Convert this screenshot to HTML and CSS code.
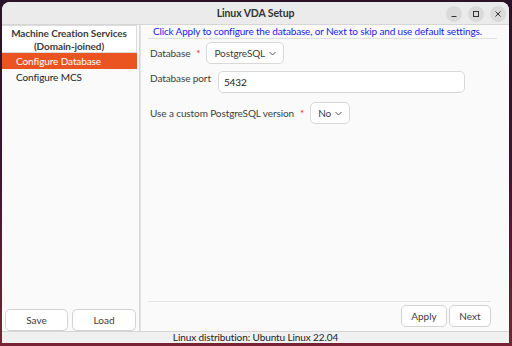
FILE: index.html
```html
<!DOCTYPE html>
<html>
<head>
<meta charset="utf-8">
<link rel="stylesheet" href="styles.css">
</head>
<body>
<div class="window">
  <div class="titlebar">
    <div class="title">Linux VDA Setup</div>
    <div class="controls">
      <span class="ctl"><svg width="8" height="8" viewBox="0 0 8 8"><path d="M1.5 6.5h5" stroke="#333" stroke-width="1"/></svg></span>
      <span class="ctl"><svg width="8" height="8" viewBox="0 0 8 8"><rect x="1.5" y="1.5" width="5" height="5" fill="none" stroke="#333" stroke-width="1"/></svg></span>
      <span class="ctl"><svg width="8" height="8" viewBox="0 0 8 8"><path d="M1.5 1.5l5 5M6.5 1.5l-5 5" stroke="#333" stroke-width="1"/></svg></span>
    </div>
  </div>
  <div class="main">
    <div class="sidebar">
      <div class="side-head">Machine Creation Services<br>(Domain-joined)</div>
      <div class="side-item active">Configure Database</div>
      <div class="side-item">Configure MCS</div>
      <div class="side-fill"></div>
      <div class="side-buttons">
        <button class="btn side-btn">Save</button>
        <button class="btn side-btn">Load</button>
      </div>
    </div>
    <div class="content">
      <div class="hint">Click Apply to configure the database, or Next to skip and use default settings.</div>
      <div class="form">
        <div class="row">
          <span class="label">Database</span><span class="req">*</span>
          <span class="combo">PostgreSQL <svg class="chev" width="7" height="5" viewBox="0 0 7 5"><path d="M0.5 1l3 3 3-3" fill="none" stroke="#555" stroke-width="1"/></svg></span>
        </div>
        <div class="row row-port">
          <span class="label label-top">Database port</span>
          <span class="input">5432</span>
        </div>
        <div class="row">
          <span class="label">Use a custom PostgreSQL version</span><span class="req">*</span>
          <span class="combo">No <svg class="chev" width="7" height="5" viewBox="0 0 7 5"><path d="M0.5 1l3 3 3-3" fill="none" stroke="#555" stroke-width="1"/></svg></span>
        </div>
      </div>
      <div class="content-fill"></div>
      <div class="actions">
        <button class="btn act-btn apply">Apply</button>
        <button class="btn act-btn next">Next</button>
      </div>
    </div>
  </div>
  <div class="status">Linux distribution: Ubuntu Linux 22.04</div>
</div>
</body>
</html>
```
FILE: styles.css
```css
* { box-sizing: border-box; }
html, body { margin: 0; padding: 0; }
body {
  width: 512px; height: 346px; overflow: hidden;
  background: linear-gradient(180deg, #2a1326 0%, #3d1530 50%, #7a2235 100%);
  font-family: Lato, sans-serif;
  font-size: 10px;
  letter-spacing: -0.1px;
  color: #3c3c3c;
  padding: 2px 3px 3px 2px;
}
.window {
  width: 507px; height: 341px;
  background: #fafafa;
  border-radius: 8px 8px 0 0;
  display: flex; flex-direction: column;
  overflow: hidden;
}
.titlebar {
  height: 23px; flex: none;
  background: #ebebeb;
  border-bottom: 1px solid #d6d6d6;
  display: flex; align-items: center; justify-content: center;
  position: relative;
}
.title { font-weight: bold; font-size: 10.5px; color: #333; }
.controls {
  position: absolute; right: 3px; top: 4px;
  display: flex; gap: 6px;
}
.ctl {
  width: 16px; height: 16px; border-radius: 50%;
  background: #dadada;
  display: flex; align-items: center; justify-content: center;
}
.main { flex: 1; display: flex; min-height: 0; }
.sidebar {
  width: 138px; flex: none;
  display: flex; flex-direction: column;
  background: #fafafa;
  border-right: 1px solid #d8d8d8;
}
.side-head {
  background: #fff;
  border: 1px solid #dcdcdc; border-left: none;
  margin-right: 2px;
  text-align: center; font-weight: bold; color: #3c3c3c;
  line-height: 13px; padding: 1px 0 1px;
  height: 28px;
}
.side-item { height: 16px; line-height: 16px; padding-left: 14px; color: #222; margin-right: 2px; }
.side-item.active { background: #e95420; color: #fff; }
.side-fill { flex: 1; }
.side-buttons { display: flex; gap: 4px; padding: 0 2px 0 3px; height: 22px; }
.btn {
  font: inherit; color: #3c3c3c;
  background: #fff; border: 1px solid #d2d2d2; border-radius: 5px;
  padding: 0;
}
.side-btn { width: 63px; height: 22px; }
.side-btn + .side-btn { width: 64px; }
.content {
  flex: 1; min-width: 0; display: flex; flex-direction: column;
  padding: 0 18px 4px 7px;
  border-left: 1px solid #e4e4e4;
}
.hint {
  color: #1a1af0; padding: 0 0 1px 5px; line-height: 11px; margin-top: 1px;
  border-bottom: 1px solid #e0e0e0; white-space: nowrap;
  letter-spacing: -0.16px;
  margin-right: -6px;
}
.form { padding: 3px 0 0 2px; display: flex; flex-direction: column; }
.row { display: flex; align-items: center; }
.label { color: #3c3c3c; }
.req { color: #e0242c; margin-left: 6px; margin-right: 6px; }
.combo {
  display: inline-flex; align-items: center; gap: 4px;
  height: 22px; padding: 0 7px;
  background: #fff; border: 1px solid #d8d8d8; border-radius: 5px;
  color: #3c3c3c;
}
.chev { margin-top: 1px; }
.row-port { align-items: flex-start; margin-top: 7px; }
.label-top { margin-top: 1px; }
.input {
  margin-left: 7px;
  width: 247px; height: 22px; line-height: 20px;
  padding-left: 5px; color: #222;
  background: #fff; border: 1px solid #d8d8d8; border-radius: 5px;
}
.row + .row + .row { margin-top: 9px; }
.content-fill { flex: 1; border-bottom: 1px solid #e4e4e4; }
.actions { display: flex; justify-content: flex-end; gap: 2px; padding-top: 3px; }
.act-btn { height: 22px; }
.apply { width: 46px; }
.next { width: 42px; }
.status {
  height: 12px; flex: none; line-height: 11px;
  text-align: center; color: #222;
  background: #f0f0f0; border-top: 1px solid #d6d6d6;
}
```
